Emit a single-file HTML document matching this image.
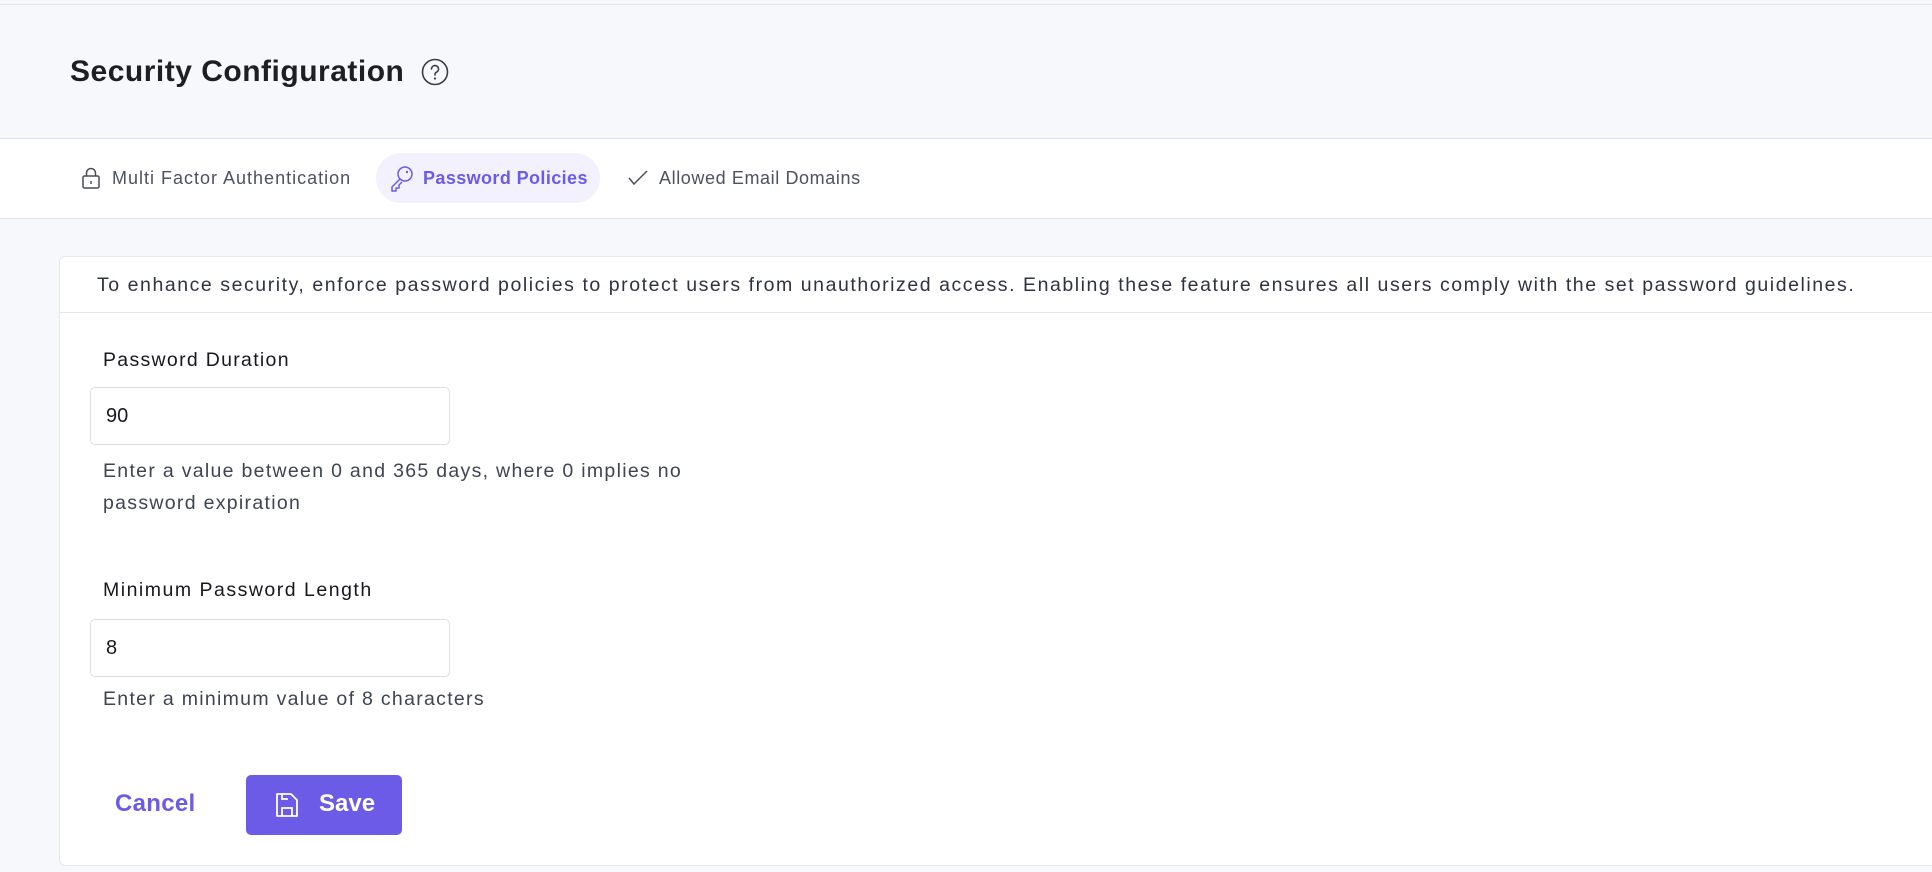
<!DOCTYPE html>
<html><head><meta charset="utf-8"><style>
*{box-sizing:border-box;margin:0;padding:0}
body{width:1932px;height:872px;overflow:hidden;background:#f7f8fc;font-family:"Liberation Sans",sans-serif;position:relative;color:#1f2229}
.abs{position:absolute}
</style></head><body>
<div class="abs" style="left:0;top:4px;width:1932px;height:1px;background:#e3e5ee"></div>
<div class="abs" style="left:70px;top:52px;font-size:30px;font-weight:bold;color:#1d1f24;line-height:40px;letter-spacing:0.5px">Security Configuration</div>
<svg class="abs" style="left:421px;top:58px" width="28" height="28" viewBox="0 0 28 28"><circle cx="14" cy="14" r="12.5" fill="none" stroke="#3a3d46" stroke-width="1.6"/><path d="M10.5 11a3.5 3.5 0 1 1 5 3.2c-1 .5-1.5 1.2-1.5 2.3v.5" fill="none" stroke="#3a3d46" stroke-width="1.6" stroke-linecap="round"/><circle cx="14" cy="20.5" r="1.1" fill="#3a3d46"/></svg>
<div class="abs" style="left:0;top:138px;width:1932px;height:81px;background:#fff;border-top:1px solid #e1e3ec;border-bottom:1px solid #e1e3ec"></div>
<svg class="abs" style="left:81px;top:167px" width="20" height="22" viewBox="0 0 20 22"><rect x="2" y="9" width="16" height="12" rx="1.5" fill="none" stroke="#4a4d57" stroke-width="1.5"/><path d="M5.5 9V6a4.5 4.5 0 0 1 9 0v3" fill="none" stroke="#4a4d57" stroke-width="1.5"/><path d="M10 14v3" stroke="#4a4d57" stroke-width="1.5"/></svg>
<div class="abs" style="left:112px;top:166px;font-size:18px;color:#4d5160;line-height:24px;letter-spacing:1px">Multi Factor Authentication</div>
<div class="abs" style="left:376px;top:153px;width:224px;height:50px;border-radius:25px;background:#f3f1fe"></div>
<svg class="abs" style="left:389px;top:165px" width="26" height="28" viewBox="0 0 26 28"><circle cx="16" cy="9" r="7" fill="none" stroke="#6b5be6" stroke-width="1.5"/><circle cx="18" cy="7" r="1.2" fill="#6b5be6"/><path d="M11 14L3 22v4h4v-3h3v-3l3-3" fill="none" stroke="#6b5be6" stroke-width="1.5" stroke-linejoin="round"/></svg>
<div class="abs" style="left:423px;top:166px;font-size:18px;font-weight:bold;color:#6b5be6;line-height:24px;letter-spacing:0.4px">Password Policies</div>
<svg class="abs" style="left:627px;top:169px" width="22" height="18" viewBox="0 0 22 18"><path d="M2 9l5 6L20 2" fill="none" stroke="#4a4d57" stroke-width="1.5"/></svg>
<div class="abs" style="left:659px;top:166px;font-size:18px;color:#4d5160;line-height:24px;letter-spacing:0.6px">Allowed Email Domains</div>
<div class="abs" style="left:59px;top:256px;width:1900px;height:610px;background:#fff;border:1px solid #e6e8ef;border-radius:6px"></div>
<div class="abs" style="left:60px;top:312px;width:1880px;height:1px;background:#e3e5ee"></div>
<div class="abs" style="left:97px;top:272px;font-size:19.5px;color:#2f3340;line-height:26px;white-space:nowrap;letter-spacing:1.55px">To enhance security, enforce password policies to protect users from unauthorized access. Enabling these feature ensures all users comply with the set password guidelines.</div>
<div class="abs" style="left:103px;top:347px;font-size:19.5px;color:#16181d;line-height:26px;letter-spacing:1.3px">Password Duration</div>
<div class="abs" style="left:90px;top:387px;width:360px;height:58px;border:1px solid #dcdfe8;border-radius:5px"></div>
<div class="abs" style="left:106px;top:403px;font-size:20px;color:#16181d;line-height:26px">90</div>
<div class="abs" style="left:103px;top:455px;font-size:19.5px;color:#3f4452;line-height:32px;letter-spacing:1.3px;white-space:nowrap">Enter a value between 0 and 365 days, where 0 implies no<br>password expiration</div>
<div class="abs" style="left:103px;top:577px;font-size:19.5px;color:#16181d;line-height:26px;letter-spacing:1.5px">Minimum Password Length</div>
<div class="abs" style="left:90px;top:619px;width:360px;height:58px;border:1px solid #dcdfe8;border-radius:5px"></div>
<div class="abs" style="left:106px;top:635px;font-size:20px;color:#16181d;line-height:26px">8</div>
<div class="abs" style="left:103px;top:686px;font-size:19.5px;color:#3f4452;line-height:26px;letter-spacing:1.3px">Enter a minimum value of 8 characters</div>
<div class="abs" style="left:115px;top:789px;font-size:24px;font-weight:bold;color:#6b5be6;line-height:30px;letter-spacing:0.3px">Cancel</div>
<div class="abs" style="left:246px;top:775px;width:156px;height:60px;border-radius:5px;background:#6b5be6"></div>
<svg class="abs" style="left:274px;top:791px" width="26" height="28" viewBox="0 0 26 28"><path d="M3 3h14l6 6v16H3z" fill="none" stroke="#fff" stroke-width="1.8" stroke-linejoin="round"/><path d="M8 25v-8h10v8" fill="none" stroke="#fff" stroke-width="1.8"/><path d="M8 4v4h6" fill="none" stroke="#fff" stroke-width="1.8"/></svg>
<div class="abs" style="left:319px;top:789px;font-size:24px;font-weight:bold;color:#fff;line-height:30px">Save</div>
</body></html>
